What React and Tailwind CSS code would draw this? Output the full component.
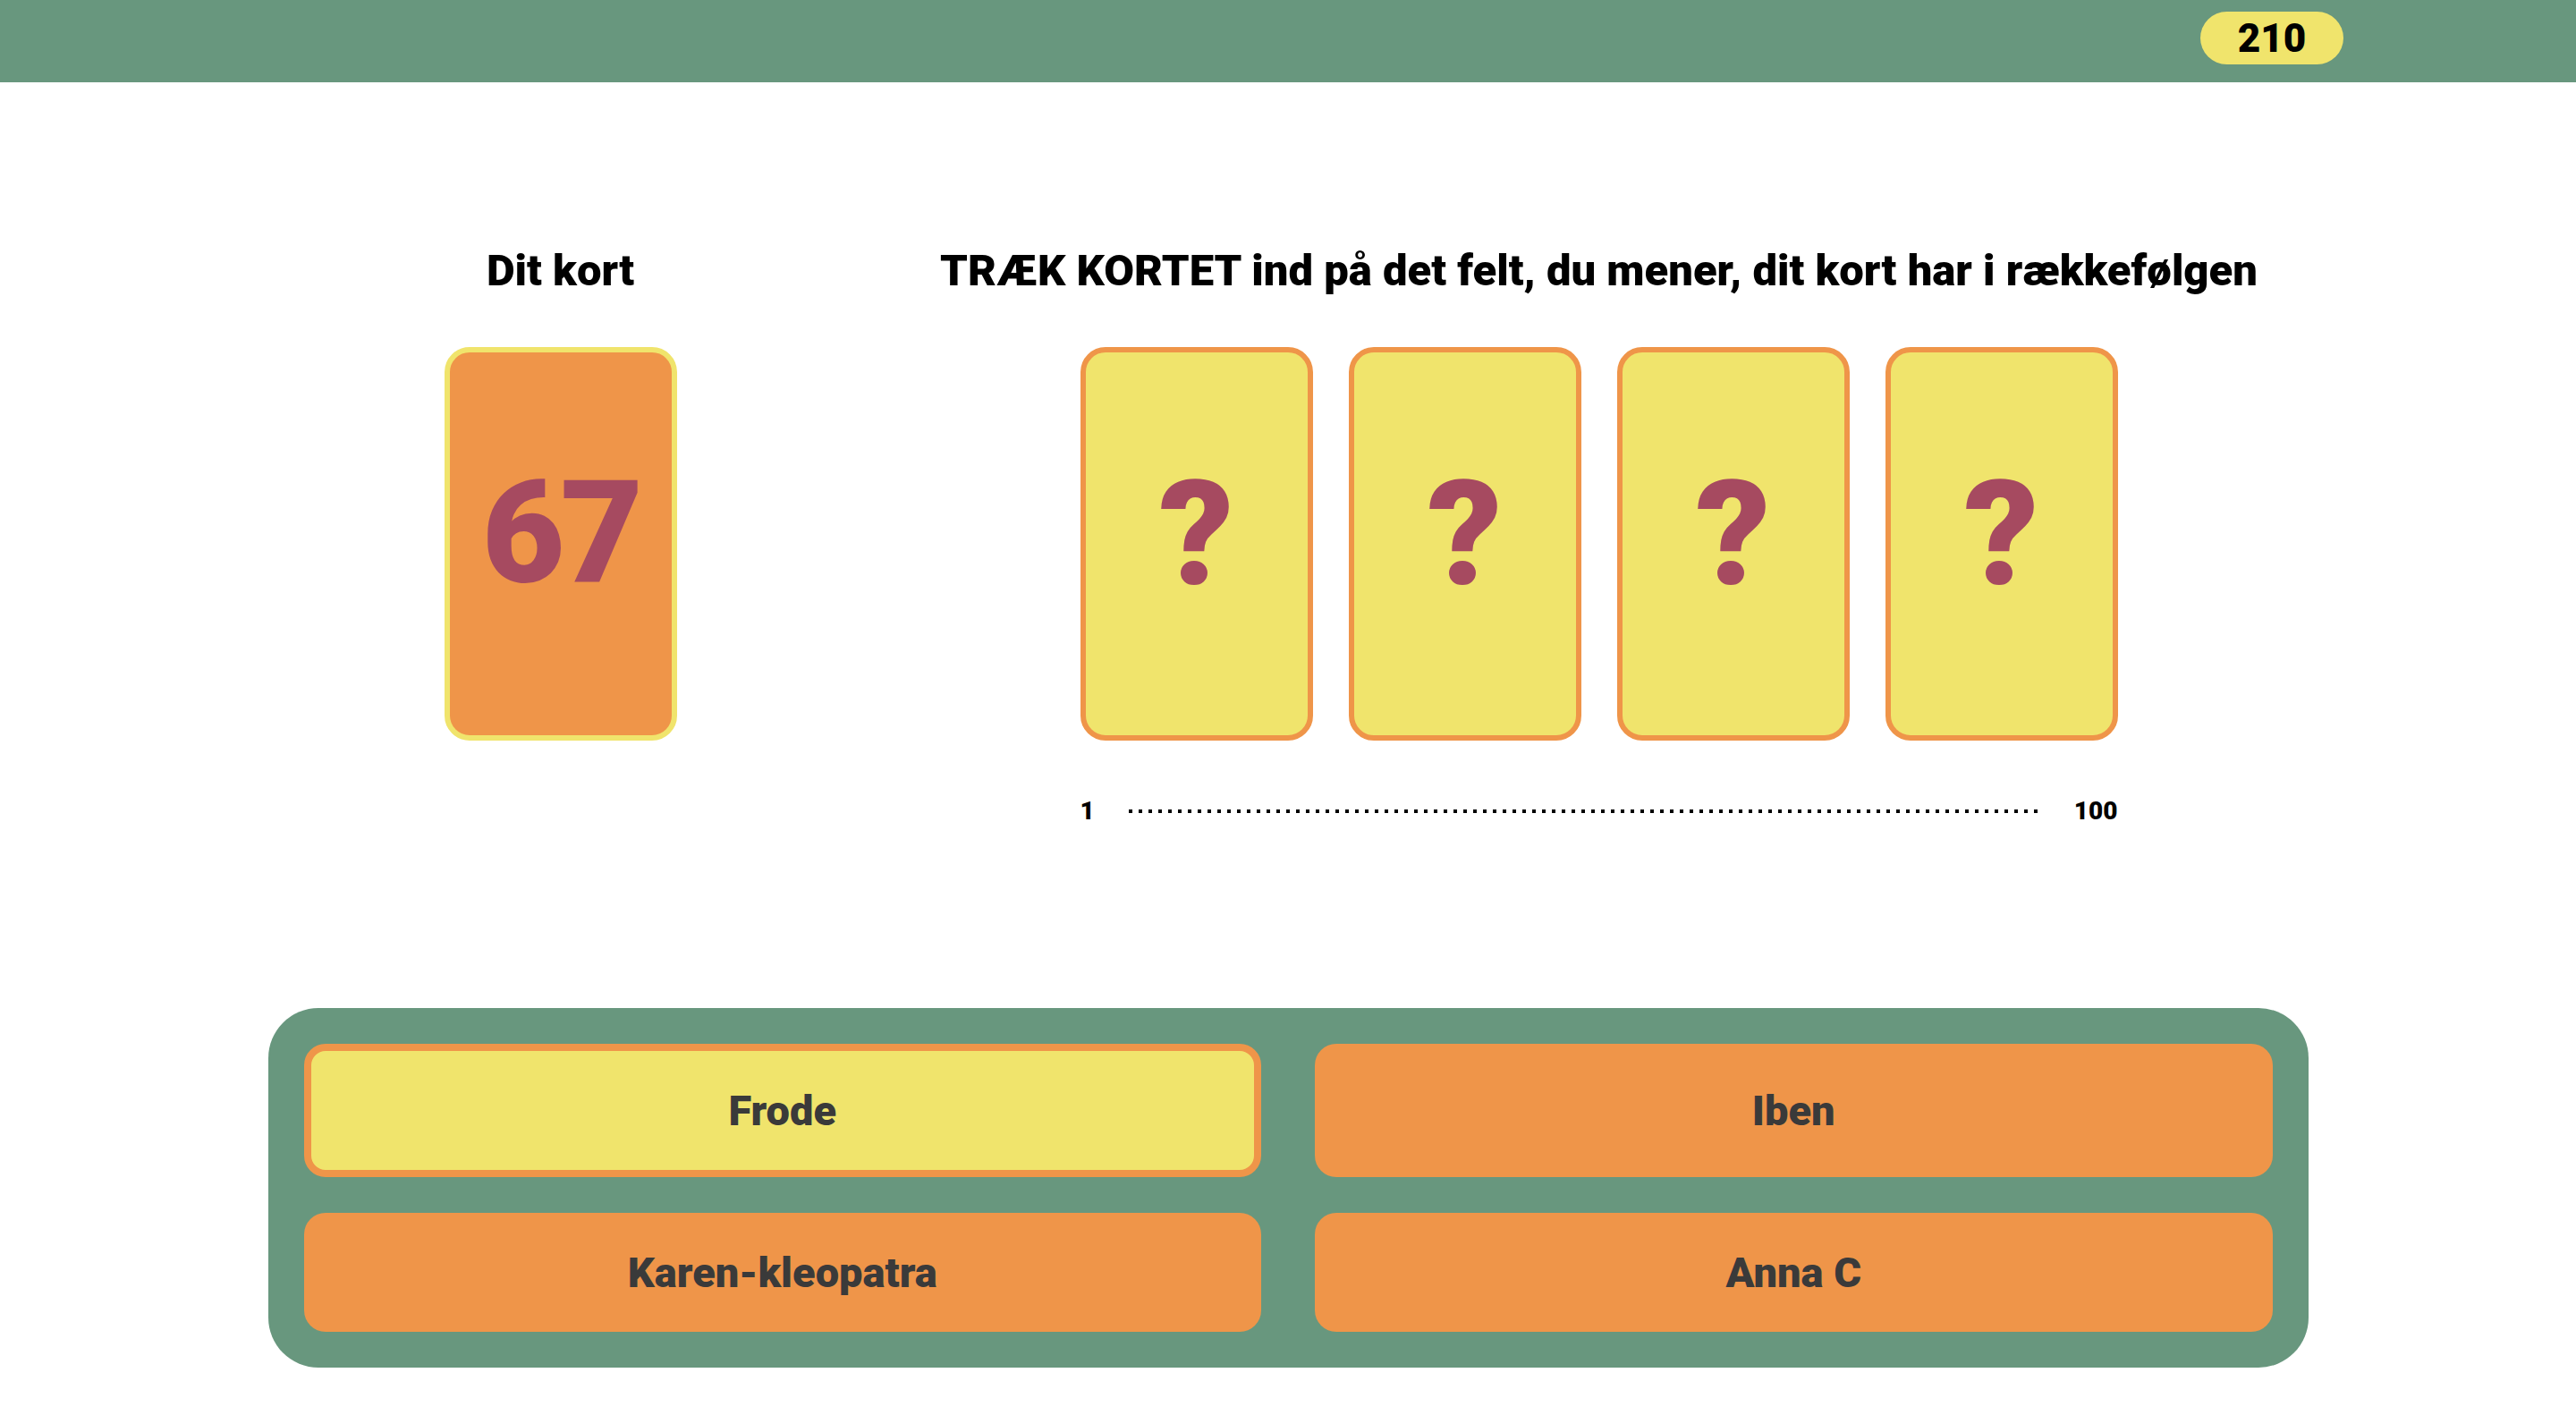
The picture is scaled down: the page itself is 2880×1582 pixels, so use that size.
import React from "react";

function QCard() {
  return (
    <div className="w-[260px] h-[440px] rounded-[28px] border-[6px] border-[#ef9549] bg-[#f0e46c] flex items-center justify-center pb-[22px]">
      <span className="text-[164px] leading-none font-black text-[#a64a60]">?</span>
    </div>
  );
}

function NameButton({ name, selected }) {
  return (
    <div
      className={
        selected
          ? "flex items-center justify-center rounded-[24px] border-[8px] border-[#ef9549] bg-[#f0e46c] py-[43px]"
          : "flex items-center justify-center rounded-[24px] bg-[#ef9549] py-[43px]"
      }
    >
      <span className="text-[47px] leading-none font-black text-[#3a3a3a]">{name}</span>
    </div>
  );
}

export default function App() {
  return (
    <div className="min-h-screen bg-white font-['Roboto',sans-serif] text-black">
      <header className="h-[92px] bg-[#68977e] flex items-start justify-end pr-[260px] pt-[13px]">
        <div className="w-[160px] h-[59px] rounded-full bg-[#f0e46c] flex items-center justify-center text-[44px] leading-none font-black">
          210
        </div>
      </header>

      <div className="w-[2281px] mx-auto mt-[186px] flex">
        <div className="w-[654px] shrink-0 flex flex-col items-center">
          <h2 className="text-[49px] leading-none font-black">Dit kort</h2>
          <div className="mt-[61px] w-[260px] h-[440px] rounded-[28px] border-[6px] border-[#f0e46c] bg-[#ef9549] flex items-center justify-center pb-[24px]">
            <span className="text-[160px] leading-none font-black text-[#a64a60] tracking-[-5px]">67</span>
          </div>
        </div>
        <div className="w-[1668px] shrink-0 flex flex-col items-center">
          <h2 className="text-[49px] leading-none font-black whitespace-nowrap">
            TRÆK KORTET ind på det felt, du mener, dit kort har i rækkefølgen
          </h2>
          <div className="mt-[61px] w-[1160px] flex gap-[40px]">
            <QCard />
            <QCard />
            <QCard />
            <QCard />
          </div>
          <div className="mt-[65px] w-[1160px] h-[28px] flex items-center">
            <span className="text-[28px] leading-none font-black">1</span>
            <svg className="flex-1 h-[4px] ml-[38px] mr-[40px]" shapeRendering="crispEdges">
              <line x1="0" y1="2" x2="100%" y2="2" stroke="#000" strokeWidth="4" strokeDasharray="4 7" />
            </svg>
            <span className="text-[28px] leading-none font-black">100</span>
          </div>
        </div>
      </div>

      <div className="w-[2281px] mx-auto mt-[206px] rounded-[56px] bg-[#68977e] p-[40px] grid grid-cols-2 gap-x-[60px] gap-y-[40px]">
        <NameButton name="Frode" selected />
        <NameButton name="Iben" />
        <NameButton name="Karen-kleopatra" />
        <NameButton name="Anna C" />
      </div>
    </div>
  );
}
